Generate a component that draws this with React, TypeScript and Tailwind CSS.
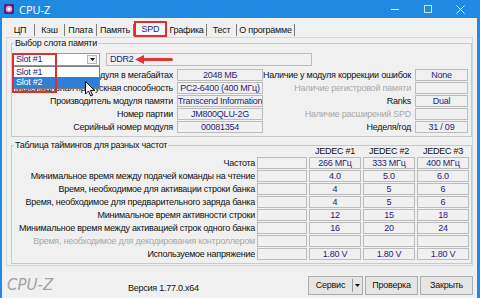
import React from "react";

const valCls =
  "h-[12px] border border-[#bcbcbc] bg-[#f0f0f0] flex items-center justify-center text-[#1f1f78] leading-none whitespace-nowrap overflow-hidden";

function Box({ w, children }: { w: string; children?: React.ReactNode }) {
  return <div className={`${valCls} ${w}`}>{children}</div>;
}

const leftRows: [string, string, boolean][] = [
  ["Размер модуля в мегабайтах", "2048 МБ", false],
  ["Максимальная пропускная способность", "PC2-6400 (400 МГц)", false],
  ["Производитель модуля памяти", "Transcend Information", false],
  ["Номер партии", "JM800QLU-2G", false],
  ["Серийный номер модуля", "00081354", false],
];
const rightRows: [string, string, boolean][] = [
  ["Наличие у модуля коррекции ошибок", "None", false],
  ["Наличие регистровой памяти", "", true],
  ["Ranks", "Dual", false],
  ["Наличие расширений SPD", "", true],
  ["Неделя/год", "31 / 09", false],
];

const timing: [string, string[], boolean][] = [
  ["Частота", ["266 МГц", "333 МГц", "400 МГц"], false],
  ["Минимальное время между подачей команды на чтение", ["4.0", "5.0", "6.0"], false],
  ["Время, необходимое для активации строки банка", ["4", "5", "6"], false],
  ["Время, необходимое для предварительного заряда банка", ["4", "5", "6"], false],
  ["Минимальное время активности строки", ["12", "15", "18"], false],
  ["Минимальное время между активацией строк одного банка", ["16", "20", "24"], false],
  ["Время, необходимое для декодирования контроллером", ["", "", ""], true],
  ["Используемое напряжение", ["1.80 V", "1.80 V", "1.80 V"], false],
];

const tabs: [string, string][] = [
  ["ЦП", "w-[29px]"],
  ["Кэш", "w-[30px]"],
  ["Плата", "w-[32px]"],
  ["Память", "w-[37px]"],
  ["SPD", "w-[33px]"],
  ["Графика", "w-[40px]"],
  ["Тест", "w-[30px]"],
  ["О программе", "w-[58px]"],
];

export default function App() {
  return (
    <div className="w-[480px] h-[298px] bg-[#1f8ae0] pl-[2px] pr-[3px] flex flex-col overflow-hidden font-['Liberation_Sans',Arial,sans-serif] text-[9px] tracking-[-0.25px] text-[#111]">
      {/* Title bar */}
      <div className="h-[18px] flex items-center shrink-0">
        <svg width="10" height="10" viewBox="0 0 10 10" className="ml-[2px]">
          <rect x="0" y="0" width="10" height="10" fill="#4a2a7e" />
          <circle cx="5" cy="5" r="3.2" fill="#e79ad8" />
          <circle cx="5" cy="5" r="1.5" fill="#ffffff" />
        </svg>
        <span className="ml-[5px] text-white text-[11px] tracking-normal leading-none font-['Open_Sans',sans-serif]">CPU-Z</span>
        <div className="ml-auto flex h-full">
          <div className="w-[33px] flex items-center justify-center">
            <div className="w-[8px] h-[1px] bg-[#e8f2fc]" />
          </div>
          <div className="w-[33px] flex items-center justify-center">
            <div className="w-[8px] h-[8px] border border-[#cfe3f7]" />
          </div>
          <div className="w-[33px] flex items-center justify-center">
            <svg width="9" height="9" viewBox="0 0 9 9">
              <path d="M0.5 0.5 L8.5 8.5 M8.5 0.5 L0.5 8.5" stroke="#f2f8fe" strokeWidth="1" />
            </svg>
          </div>
        </div>
      </div>

      {/* Body */}
      <div className="flex-1 bg-[#f0f0f0] flex flex-col">
        {/* Tabs */}
        <div className="h-[19px] flex items-end pl-[4px] shrink-0">
          {tabs.map(([t, w]) =>
            t === "SPD" ? (
              <div
                key={t}
                className={`${w} h-[16px] border-2 border-[#dc2f2f] bg-[#f7f7f7] flex items-center justify-center leading-none text-[#1f1f78]`}
              >
                {t}
              </div>
            ) : (
              <div key={t} className={`${w} h-[14px] flex items-center justify-center leading-none`}>
                <span className="flex-1 text-center">{t}</span>
                <span className="w-[1px] h-[12px] bg-[#7d7d7d]" />
              </div>
            )
          )}
        </div>

        {/* Panel */}
        <div className="ml-[4px] mr-[4px] border border-[#d6d6d6] pl-[4px] pb-[1px] flex flex-col">
          {/* Group 1 */}
          <fieldset className="border border-[#c9c9c9] pb-[3px]">
            <legend className="ml-[2px] px-[1px] leading-[11px]">Выбор слота памяти</legend>
            <div className="pt-[4px] flex h-[17px] items-end">
              <div className="relative ml-[1px] w-[87px] h-[13px] bg-white border border-[#9a9a9a] flex items-center">
                <span className="pl-[2px] text-[#1f1f78] leading-none">Slot #1</span>
                <div className="ml-auto mr-[2px] w-[10px] h-[9px] border border-[#b5b5b5] bg-[#f2f2f2] flex items-center justify-center">
                  <svg width="5" height="3" viewBox="0 0 5 3">
                    <path d="M0 0 H5 L2.5 3 Z" fill="#111" />
                  </svg>
                </div>
                {/* dropdown list */}
                <div className="absolute left-[-1px] top-[12px] w-[87px] h-[23px] bg-white border border-[#7a7a7a] z-10 flex flex-col">
                  <div className="h-[10px] flex items-center pl-[2px] text-[#1f1f78] leading-none">Slot #1</div>
                  <div className="h-[11px] flex items-center pl-[2px] bg-[#2f7fd6] text-white leading-none">Slot #2</div>
                </div>
                {/* red highlight */}
                <div className="absolute left-[-2px] top-[-1px] w-[45px] h-[40px] border-2 border-[#dc2f2f] z-20" />
                {/* cursor */}
                <svg width="10" height="16" viewBox="0 0 10 16" className="absolute left-[71px] top-[27px] z-30">
                  <path d="M0.5 0.5 V13 L3.5 10 L5.8 15 L7.6 14.2 L5.4 9.4 L9.5 9.4 Z" fill="#fff" stroke="#000" strokeWidth="1" />
                </svg>
              </div>
              <div className="relative ml-[6px] w-[206px] h-[13px] border border-[#bcbcbc] bg-[#f0f0f0] flex items-center">
                <span className="pl-[3px] text-[#1f1f78] leading-none">DDR2</span>
                <svg width="38" height="9" viewBox="0 0 38 9" className="absolute left-[28px] top-[1px]">
                  <path d="M0 4.5 L9 0 L9 9 Z" fill="#e03535" />
                  <rect x="8" y="3" width="30" height="3" rx="1.5" fill="#e03535" />
                </svg>
              </div>
            </div>
            <div className="mt-[3px] flex flex-col gap-[1px]">
              {leftRows.map((l, i) => {
                const r = rightRows[i];
                return (
                  <div key={i} className="flex items-center h-[12px]">
                    <div className="w-[161px] text-right leading-none whitespace-nowrap overflow-hidden">{l[0]}</div>
                    <div className="ml-[4px]">
                      <Box w="w-[86px]">{l[1]}</Box>
                    </div>
                    <div className={`w-[148px] text-right leading-none whitespace-nowrap ${r[2] ? "text-[#a9a9a9]" : ""}`}>
                      {r[0]}
                    </div>
                    <div className="ml-[4px]">
                      <Box w="w-[53px]">{r[1]}</Box>
                    </div>
                  </div>
                );
              })}
            </div>
          </fieldset>

          {/* Group 2 */}
          <fieldset className="mt-[3px] border border-[#c9c9c9] pb-[3px]">
            <legend className="ml-[2px] px-[1px] leading-[11px]">Таблица таймингов для разных частот</legend>
            <div className="-mt-[6px] h-[12px] flex items-center">
              <div className="w-[295px]" />
              {["JEDEC #1", "JEDEC #2", "JEDEC #3"].map((h) => (
                <div key={h} className="ml-[2px] w-[52px] text-center leading-none">
                  {h}
                </div>
              ))}
            </div>
            <div className="flex flex-col gap-[1px]">
              {timing.map(([label, vals, grey], i) => (
                <div key={i} className="flex items-center h-[12px]">
                  <div className={`w-[243px] text-right leading-none whitespace-nowrap ${grey ? "text-[#a9a9a9]" : ""}`}>
                    {label}
                  </div>
                  <div className="ml-[2px]">
                    <Box w="w-[50px]" />
                  </div>
                  {vals.map((v, j) => (
                    <div key={j} className="ml-[2px]">
                      <Box w="w-[52px]">{v}</Box>
                    </div>
                  ))}
                </div>
              ))}
            </div>
          </fieldset>
        </div>

        {/* Footer */}
        <div className="flex-1 flex items-start">
          <div className="w-[126px] pl-[5px] pt-[10px] italic text-[15px] tracking-normal leading-[18px] text-[#a3a3a3] font-['DejaVu_Sans',sans-serif]">
            CPU-Z
          </div>
          <div className="pt-[17px] leading-[11px]">Версия 1.77.0.x64</div>
          <div className="ml-auto mr-[4px] mt-[10px] flex gap-[2px]">
            <div className="w-[55px] h-[19px] border border-[#adadad] bg-[#e5e5e5] flex items-center">
              <span className="flex-1 text-center leading-none">Сервис</span>
              <span className="w-[1px] h-[13px] bg-[#9a9a9a]" />
              <span className="w-[9px] flex justify-center">
                <svg width="5" height="3" viewBox="0 0 5 3">
                  <path d="M0 0 H5 L2.5 3 Z" fill="#111" />
                </svg>
              </span>
            </div>
            <div className="w-[53px] h-[19px] border border-[#adadad] bg-[#e5e5e5] flex items-center justify-center leading-none">
              Проверка
            </div>
            <div className="w-[53px] h-[19px] border border-[#adadad] bg-[#e5e5e5] flex items-center justify-center leading-none">
              Закрыть
            </div>
          </div>
        </div>
      </div>
    </div>
  );
}
